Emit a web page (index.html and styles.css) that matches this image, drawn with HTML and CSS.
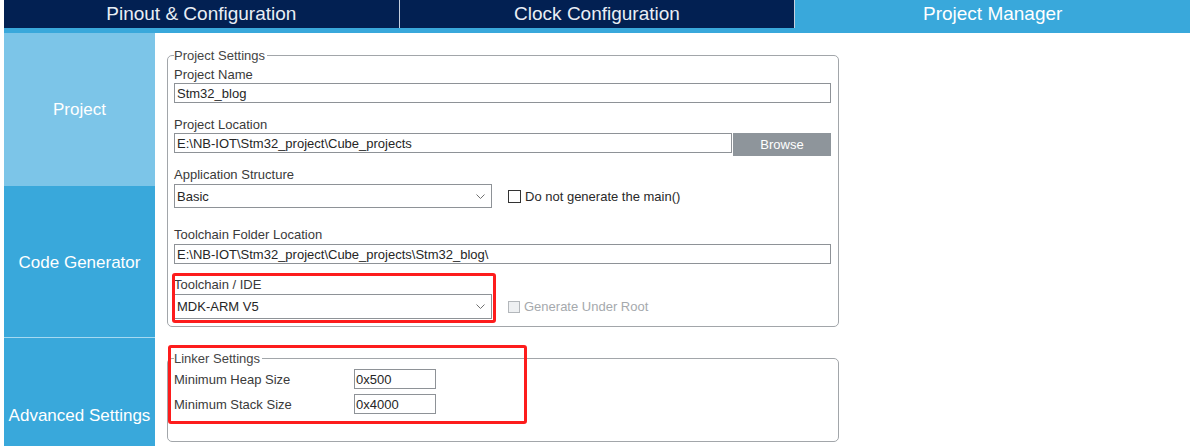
FILE: index.html
```html
<!DOCTYPE html>
<html lang="en">
<head>
<meta charset="utf-8">
<title>Project Manager</title>
<link rel="stylesheet" href="styles.css">
</head>
<body>
<div class="app">
  <nav class="tabs">
    <div class="tab">Pinout &amp; Configuration</div>
    <div class="tab">Clock Configuration</div>
    <div class="tab tab-active">Project Manager</div>
  </nav>
  <div class="strip"></div>
  <div class="main">
    <aside class="side">
      <div class="side-item side-project">Project</div>
      <div class="side-item side-code">Code Generator</div>
      <div class="side-item side-adv">Advanced Settings</div>
    </aside>
    <section class="content">
      <fieldset class="group group-project">
        <legend>Project Settings</legend>
        <div class="field f-name">
          <div class="label">Project Name</div>
          <div class="input">Stm32_blog</div>
        </div>
        <div class="field f-loc">
          <div class="label">Project Location</div>
          <div class="input-row">
            <div class="input input-grow">E:\NB-IOT\Stm32_project\Cube_projects</div>
            <div class="button">Browse</div>
          </div>
        </div>
        <div class="field f-app">
          <div class="label">Application Structure</div>
          <div class="select-row">
            <div class="select select-app">
              <span>Basic</span>
              <svg class="chev" width="9" height="5" viewBox="0 0 9 5"><polyline points="0.5,0.5 4.5,4.5 8.5,0.5" fill="none" stroke="#707070" stroke-width="1"/></svg>
            </div>
            <div class="check">
              <span class="box"></span>
              <span class="check-text">Do not generate the main()</span>
            </div>
          </div>
        </div>
        <div class="field f-folder">
          <div class="label">Toolchain Folder Location</div>
          <div class="input">E:\NB-IOT\Stm32_project\Cube_projects\Stm32_blog\</div>
        </div>
        <div class="field f-ide">
          <div class="label">Toolchain / IDE</div>
          <div class="select-row">
            <div class="select select-ide">
              <span>MDK-ARM V5</span>
              <svg class="chev" width="9" height="5" viewBox="0 0 9 5"><polyline points="0.5,0.5 4.5,4.5 8.5,0.5" fill="none" stroke="#707070" stroke-width="1"/></svg>
            </div>
            <div class="check check-disabled">
              <span class="box"></span>
              <span class="check-text">Generate Under Root</span>
            </div>
          </div>
        </div>
      </fieldset>

      <fieldset class="group group-linker">
        <legend>Linker Settings</legend>
        <div class="row">
          <div class="row-label">Minimum Heap Size</div>
          <div class="input input-small">0x500</div>
        </div>
        <div class="row">
          <div class="row-label">Minimum Stack Size</div>
          <div class="input input-small">0x4000</div>
        </div>
      </fieldset>

      <div class="mark mark-ide"></div>
      <div class="mark mark-linker"></div>
    </section>
  </div>
</div>
</body>
</html>
```

FILE: styles.css
```css
* { box-sizing: border-box; }
html, body { margin: 0; padding: 0; background: #fff; }
body {
  font-family: "Liberation Sans", Arial, sans-serif;
  width: 1190px;
  height: 446px;
  overflow: hidden;
}
.app { margin-left: 4px; }

/* top tabs */
.tabs {
  display: flex;
  gap: 1px;
  height: 28px;
  background: #c6d0de;
}
.tab {
  flex: 1;
  display: flex;
  align-items: center;
  justify-content: center;
  background: #022052;
  color: #e9eef5;
  font-size: 19px;
}
.tab-active { background: #39a8db; color: #fff; }
.strip { height: 5px; background: #39a8db; }

/* main */
.main { display: flex; height: 413px; overflow: hidden; }
.side { width: 151px; flex: none; display: flex; flex-direction: column; }
.side-item {
  flex: none;
  display: flex;
  align-items: center;
  justify-content: center;
  color: #fff;
  font-size: 17px;
}
.side-project { height: 153px; padding-top: 1px; background: #7cc5e8; }
.side-code { height: 152px; padding-top: 3px; background: #39a8db; border-bottom: 1px solid #a6d9f1; }
.side-adv { height: 156px; background: #39a8db; }

.content {
  position: relative;
  flex: 1;
  padding: 15px 0 0 12px;
  color: #3a3a3a;
  font-size: 13px;
}

/* fieldsets */
.group {
  width: 672px;
  margin: 0;
  border: 1px solid #a2a6aa;
  border-radius: 5px;
  padding: 4px 7px 7px 6px;
}
.group legend {
  margin-left: 0;
  padding: 0 2px 0 0;
  font-size: 13px;
  line-height: 15px;
  color: #454545;
}
.group-linker { margin-top: 24px; padding: 3px 7px 27px 6px; }

.label { height: 16px; line-height: 16px; }
.f-name { margin-bottom: 14px; }
.f-loc { margin-bottom: 11px; }
.f-app { margin-bottom: 19px; }
.f-folder { margin-bottom: 13px; }
.f-app .select-row, .f-folder .input, .f-ide .select-row { margin-top: 1px; }

.input {
  height: 20px;
  border: 1px solid #8e9297;
  padding: 1px 2px 0;
  line-height: 18px;
  color: #262626;
  white-space: nowrap;
  overflow: hidden;
  background: #fff;
}
.input-row { display: flex; gap: 1px; align-items: flex-start; }
.input-grow { flex: 1; }
.button {
  width: 98px;
  height: 23px;
  background: #8e959b;
  color: #fff;
  display: flex;
  align-items: center;
  justify-content: center;
  font-size: 13px;
}

.select-row { display: flex; align-items: center; }
.select {
  width: 318px;
  border: 1px solid #8e9297;
  display: flex;
  align-items: center;
  justify-content: space-between;
  padding: 0 6px 0 2px;
  color: #262626;
  background: #fff;
}
.select-app { height: 24px; }
.select-ide { height: 25px; }
.chev { display: block; }

.check { display: flex; align-items: center; margin-left: 16px; }
.box {
  width: 13px;
  height: 13px;
  border: 1px solid #333;
  background: #fff;
  margin-right: 4px;
}
.check-text { color: #2a2a2a; }
.check-disabled .box { border-color: #b3b7bb; background: #eef0f2; width: 12px; height: 12px; }
.check-disabled .check-text { color: #a5a9ad; }

.row { display: flex; align-items: center; height: 20px; }
.row + .row { margin-top: 5px; }
.row-label { width: 180px; }
.input-small { width: 82px; padding: 1px 1px 0; }

/* annotation boxes drawn over the form */
.mark {
  position: absolute;
  border: 3px solid #fd1c1c;
  border-radius: 3px;
  pointer-events: none;
}
.mark-ide { left: 17px; top: 240px; width: 324px; height: 50px; }
.mark-linker { left: 13px; top: 312px; width: 359px; height: 79px; }
```
